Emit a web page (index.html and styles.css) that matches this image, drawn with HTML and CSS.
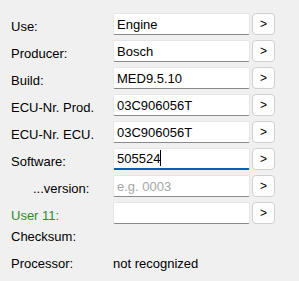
FILE: index.html
```html
<!DOCTYPE html>
<html lang="en">
<head>
    <meta charset="UTF-8">
    <meta name="viewport" content="width=device-width, initial-scale=1.0">
    <title>ECU Info</title>
    <link rel="stylesheet" href="styles.css">
</head>
<body>
    <div class="panel">
        <div class="row">
            <label class="label">Use:</label>
            <input class="field" type="text" value="Engine">
            <button class="pick">&gt;</button>
        </div>
        <div class="row">
            <label class="label">Producer:</label>
            <input class="field" type="text" value="Bosch">
            <button class="pick">&gt;</button>
        </div>
        <div class="row">
            <label class="label">Build:</label>
            <input class="field" type="text" value="MED9.5.10">
            <button class="pick">&gt;</button>
        </div>
        <div class="row">
            <label class="label">ECU-Nr. Prod.</label>
            <input class="field" type="text" value="03C906056T">
            <button class="pick">&gt;</button>
        </div>
        <div class="row">
            <label class="label">ECU-Nr. ECU.</label>
            <input class="field" type="text" value="03C906056T">
            <button class="pick">&gt;</button>
        </div>
        <div class="row">
            <label class="label">Software:</label>
            <div class="field focused">505524<span class="caret"></span></div>
            <button class="pick">&gt;</button>
        </div>
        <div class="row">
            <label class="label sub">...version:</label>
            <input class="field" type="text" placeholder="e.g. 0003">
            <button class="pick">&gt;</button>
        </div>
        <div class="row">
            <label class="label user">User 11:</label>
            <input class="field" type="text">
            <button class="pick">&gt;</button>
        </div>
        <div class="row text-row">
            <span class="label">Checksum:</span>
        </div>
        <div class="row text-row">
            <span class="label">Processor:</span>
            <span class="value">not recognized</span>
        </div>
    </div>
</body>
</html>
```

FILE: styles.css
```css
body {
    margin: 0;
    background-color: #f0f0f0;
    font-family: "Liberation Sans", Arial, sans-serif;
    font-size: 13px;
    color: #000;
}

.panel {
    padding: 13px 0 0 11px;
}

.row {
    display: flex;
    align-items: flex-start;
    height: 22px;
    margin-bottom: 5px;
}

.label {
    width: 102px;
    flex: none;
    line-height: 15px;
    padding-top: 6px;
}

.label.sub {
    padding-left: 22px;
    width: 80px;
}

.label.user {
    color: #2e8b2e;
}

.text-row .label,
.text-row .value {
    padding-top: 0;
    line-height: 15px;
}

.field {
    box-sizing: border-box;
    width: 137px;
    height: 22px;
    margin: 0;
    padding: 0 3px;
    border: 1px solid #e6e6e6;
    border-bottom: 1px solid #8a8a8a;
    border-radius: 2px;
    background-color: #fff;
    font-family: inherit;
    font-size: 13px;
    color: #000;
    line-height: 20px;
    outline: none;
}

.field::placeholder {
    color: #a6a6a6;
}

.field.focused {
    border-bottom: 2px solid #005fb8;
    line-height: 19px;
}

.caret {
    display: inline-block;
    width: 1px;
    height: 16px;
    background-color: #000;
    vertical-align: -3px;
}

.pick {
    box-sizing: border-box;
    width: 23px;
    height: 22px;
    margin-left: 2px;
    padding: 0;
    border: 1px solid #d0d0d0;
    border-radius: 4px;
    background-color: #fdfdfd;
    font-family: inherit;
    font-size: 12px;
    color: #000;
}
```
